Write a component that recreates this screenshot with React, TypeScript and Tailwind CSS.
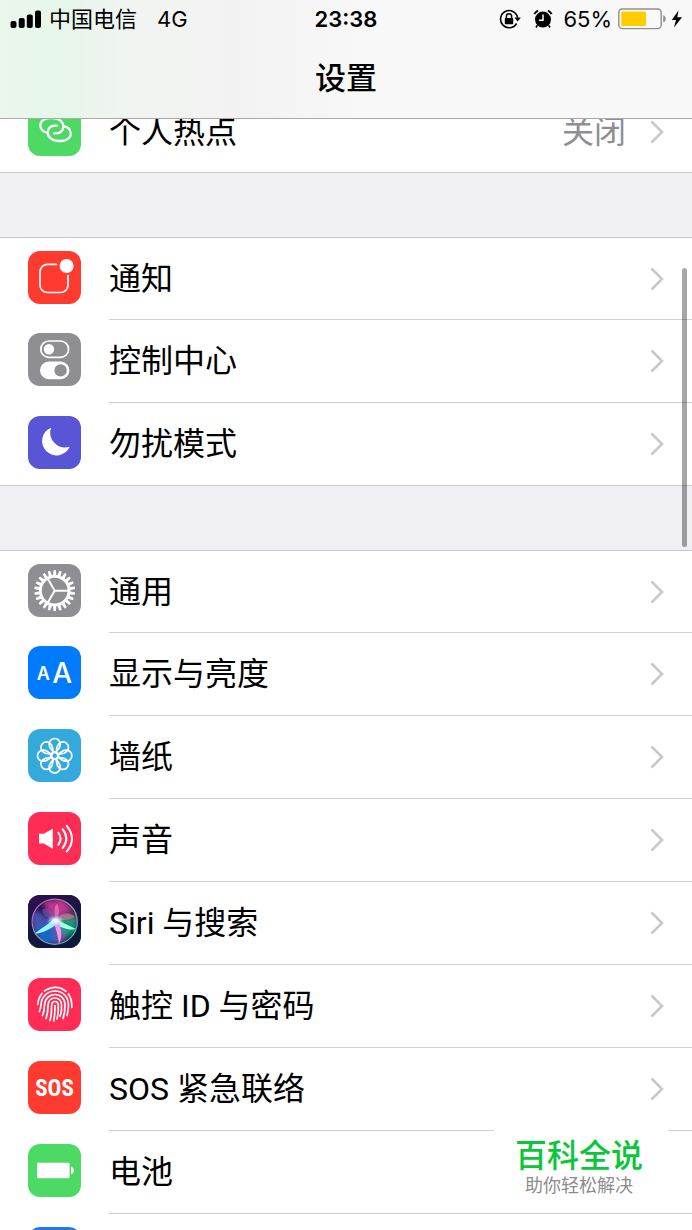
import type { ReactNode } from "react";

const white = { fill: "none", stroke: "#fff", strokeLinecap: "round" as const, strokeLinejoin: "round" as const };

function Tile({ color, children }: { color: string; children?: ReactNode }) {
  return (
    <span className={`mb-1 block size-[53px] shrink-0 overflow-hidden rounded-xl ${color}`} aria-hidden="true">
      <svg viewBox="0 0 53 53" className="block size-full">
        {children}
      </svg>
    </span>
  );
}

const HotspotIcon = () => (
  <Tile color="bg-[#4cd964]">
    <g {...white} strokeWidth="2.300">
      <path d="M19.800 29.800 C15 29 12.300 26 12.300 22.300 C12.300 18 16.500 15 21.500 15 H24.500 C30.500 15 35.300 18.500 35.300 23.500 C35.300 27.300 32.500 30.300 28.500 30.300 H26" />
      <path d="M35.200 23.200 C40 24 42.700 27 42.700 30.700 C42.700 35 38.500 38 33.500 38 H30.500 C24.500 38 19.700 34.500 19.700 29.500 C19.700 25.700 22.500 22.700 26.500 22.700 H29" />
    </g>
  </Tile>
);

const NotificationIcon = () => (
  <Tile color="bg-[#ff3b30]">
    <path
      {...white}
      strokeWidth="1.700"
      d="M28.500 13.300 H19.500 A7.500 7.500 0 0 0 12 20.800 V34 A7.500 7.500 0 0 0 19.500 41.500 H32.500 A7.500 7.500 0 0 0 40 34 V24.500"
    />
    <circle cx="38.600" cy="15" r="7" fill="#fff" />
  </Tile>
);

const ControlIcon = () => (
  <Tile color="bg-[#8e8e93]">
    <rect x="12.800" y="8" width="27.800" height="16.400" rx="8.200" {...white} strokeWidth="1.700" />
    <circle cx="21" cy="16.200" r="5.200" fill="#fff" />
    <rect x="12" y="28.600" width="29.400" height="17.600" rx="8.800" fill="#fff" />
    <circle cx="32.600" cy="37.400" r="6.200" fill="#8e8e93" />
  </Tile>
);

const MoonIcon = () => (
  <Tile color="bg-[#5856d6]">
    <path fill="#fff" d="M23 11.700 A14.400 14.400 0 1 0 41.700 30.700 A15 15 0 0 1 23 11.700 Z" />
  </Tile>
);

const teeth = Array.from({ length: 22 }, (_, i) => (i * 360) / 22);

const GearIcon = () => (
  <Tile color="bg-[#8e8e93]">
    <g transform="translate(26.700 26.700)">
      <circle r="14.300" {...white} strokeWidth="2.800" />
      {teeth.map((a) => (
        <path key={a} d="M-1.700 -15 L-1.200 -20.400 H1.200 L1.700 -15 Z" fill="#fff" transform={`rotate(${a})`} />
      ))}
      <path {...white} strokeWidth="2" d="M0 0 H14 M0 0 L-7 -12.100 M0 0 L-7 12.100" />
    </g>
  </Tile>
);

const DisplayIcon = () => (
  <Tile color="bg-[#007aff]">
    <text x="8.700" y="34" fontSize="18" fontWeight="600" fill="#fff" fontFamily="Inter, sans-serif">A</text>
    <text x="24.300" y="36.500" fontSize="28" fontWeight="500" fill="#fff" fontFamily="Inter, sans-serif">A</text>
  </Tile>
);

const WallpaperIcon = () => (
  <Tile color="bg-[#34aadc]">
    <g transform="translate(26.700 26.700)" {...white} strokeWidth="1.700">
      {[0, 45, 90, 135, 180, 225, 270, 315].map((a) => (
        <path
          key={a}
          transform={`rotate(${a})`}
          d="M0 -3.200 C-3.500 -5.500 -5.500 -8.500 -5.500 -11.700 A5.500 5.500 0 0 1 5.500 -11.700 C5.500 -8.500 3.500 -5.500 0 -3.200 Z"
        />
      ))}
      <circle r="3.200" />
    </g>
  </Tile>
);

const SoundIcon = () => (
  <Tile color="bg-[#ff2d55]">
    <path fill="#fff" d="M11 21.800 H15.800 L24.800 16.800 V36.800 L15.800 31.600 H11 Z" />
    <g {...white} strokeWidth="2">
      <path d="M30.300 20.500 Q34.800 26.700 30.300 32.900" />
      <path d="M34.600 17.200 Q42 26.700 34.600 36.200" />
      <path d="M38.700 13.800 Q49.300 26.700 38.700 39.600" />
    </g>
  </Tile>
);

const SiriIcon = () => (
  <Tile color="bg-[#141533]">
    <defs>
      <linearGradient id="siri-bg" x1="0" y1="0" x2="0.4" y2="1">
        <stop offset="0" stopColor="#2f1050" />
        <stop offset="1" stopColor="#0b1a38" />
      </linearGradient>
      <linearGradient id="siri-ring" x1="0" y1="0" x2="1" y2="1">
        <stop offset="0" stopColor="#b04bb8" />
        <stop offset="0.500" stopColor="#9aa0b8" />
        <stop offset="1" stopColor="#57b0b5" />
      </linearGradient>
      <radialGradient id="siri-glow">
        <stop offset="0" stopColor="#fff" />
        <stop offset="0.400" stopColor="#d8f6ff" stopOpacity="0.800" />
        <stop offset="1" stopColor="#7fd6ff" stopOpacity="0" />
      </radialGradient>
      <clipPath id="siri-orb">
        <circle cx="26.700" cy="26.700" r="22.500" />
      </clipPath>
      <filter id="siri-soft" x="-40%" y="-40%" width="180%" height="180%">
        <feGaussianBlur stdDeviation="2.600" />
      </filter>
      <filter id="siri-fine" x="-20%" y="-20%" width="140%" height="140%">
        <feGaussianBlur stdDeviation="0.500" />
      </filter>
    </defs>
    <rect width="53" height="53" fill="url(#siri-bg)" />
    <g clipPath="url(#siri-orb)">
      <g filter="url(#siri-soft)">
        <path d="M26 26 L14 6 L36 4 L44 14 Z" fill="#c0368f" />
        <path d="M26 26 L2 12 L4 34 Z" fill="#4b4fb0" />
        <path d="M26 26 L4 34 L14 50 L28 48 Z" fill="#1668c4" />
        <path d="M26 26 L28 50 L38 46 L36 32 Z" fill="#7a4ab0" />
        <path d="M26 26 L50 22 L48 38 L38 42 Z" fill="#0e9a7c" />
        <path d="M28 24 L44 12 L50 24 Z" fill="#6b3560" />
      </g>
      <g filter="url(#siri-fine)">
        <path d="M28 26 C20 25 12 17 15 14 C20 12 27 18 28 26 Z" fill="#8c63c8" opacity="0.450" />
        <path d="M28 25 C25 17 27 9 29 9 C32 13 32 20 28 25 Z" fill="#e58cc4" opacity="0.600" />
        <path d="M28 24 C34 17 43 17 47 22 C42 25 34 26 28 24 Z" fill="#c497ad" opacity="0.550" />
        <path d="M27 23 C20 30 12 34 6 39 C16 38 24 33 30 28 Z" fill="#9df4f6" />
        <path d="M28 23 C34 28 42 31 48 34 C40 36 32 32 26 28 Z" fill="#a5ffe0" />
        <path d="M25 26 C28 33 30 41 31 49 C35 42 33 32 30 25 Z" fill="#ec9ce8" />
      </g>
      <ellipse cx="27.500" cy="26" rx="9" ry="6" fill="url(#siri-glow)" />
    </g>
    <circle cx="26.700" cy="26.700" r="22.600" fill="none" stroke="url(#siri-ring)" strokeWidth="1.200" />
  </Tile>
);

const TouchIdIcon = () => (
  <Tile color="bg-[#ff2d55]">
    <g {...white} strokeWidth="1.700">
      <path d="M16.500 13 C23 8 32 8 38 13.300" />
      <path d="M9.800 26.500 C10 22 11.500 18.500 14 15.500 M40.500 16 C43 19.500 44 24 43.800 29.500" />
      <path d="M11.500 33.500 C12.500 31 12.800 29 13 26.500 C13.500 18 20 13 27 13 C35 13 40.500 19 40.500 27 C40.500 31 40 34 39 37.500" />
      <path d="M14.500 37.500 C16 34 16.500 31 16.500 27 C16.800 20.500 21.500 16.500 27 16.500 C33 16.500 37 21 37 27 C37 32 36.500 36.500 35 40.500" />
      <path d="M18 40.500 C19.600 36 20 32 20 27.500 C20 22.800 23 20 27 20 C31 20 33.600 23 33.600 27.500 C33.600 33 33 36 32 38" />
      <path d="M22 42.500 C23.300 38 23.600 33 23.600 28 C23.600 25 25 23.500 27 23.500 C29 23.500 30.300 25 30.300 28 C30.300 33 30 37.500 29 41" />
      <path d="M26.900 27.500 C27 33 26.700 38 25.700 43" />
    </g>
  </Tile>
);

const SosIcon = () => (
  <Tile color="bg-[#ff3b30]">
    <text
      x="26.500"
      y="34.800"
      textAnchor="middle"
      fontSize="23"
      fontWeight="700"
      fill="#fff"
      fontFamily="'Roboto Condensed', 'Liberation Sans Narrow', Roboto, sans-serif"
    >
      SOS
    </text>
  </Tile>
);

const BatteryIcon = () => (
  <Tile color="bg-[#4cd964]">
    <rect x="9" y="18.700" width="32.600" height="15.600" rx="1" fill="#fff" />
    <path d="M43 22.800 C47 23.800 47 29.200 43 30.200 Z" fill="#fff" />
  </Tile>
);

const PrivacyIcon = () => <Tile color="bg-[#1a7ae8]" />;

type Item = { id: string; icon: ReactNode; label?: string; value?: string };

const groups: Item[][] = [
  [{ id: "hotspot", icon: <HotspotIcon />, label: "个人热点", value: "关闭" }],
  [
    { id: "notifications", icon: <NotificationIcon />, label: "通知" },
    { id: "control", icon: <ControlIcon />, label: "控制中心" },
    { id: "dnd", icon: <MoonIcon />, label: "勿扰模式" },
  ],
  [
    { id: "general", icon: <GearIcon />, label: "通用" },
    { id: "display", icon: <DisplayIcon />, label: "显示与亮度" },
    { id: "wallpaper", icon: <WallpaperIcon />, label: "墙纸" },
    { id: "sounds", icon: <SoundIcon />, label: "声音" },
    { id: "siri", icon: <SiriIcon />, label: "Siri 与搜索" },
    { id: "touchid", icon: <TouchIdIcon />, label: "触控 ID 与密码" },
    { id: "sos", icon: <SosIcon />, label: "SOS 紧急联络" },
    { id: "battery", icon: <BatteryIcon />, label: "电池" },
    { id: "more", icon: <PrivacyIcon /> },
  ],
];

function Chevron() {
  return (
    <svg viewBox="0 0 14 24" className="h-6 w-3.5 shrink-0" aria-hidden="true">
      <path d="M1.500 1.500 L12 12 L1.500 22.500" fill="none" stroke="#c7c7cc" strokeWidth="2.600" />
    </svg>
  );
}

function Row({ item }: { item: Item }) {
  return (
    <li className="group h-[83px] border-[#c8c7cc] font-[Roboto,'Noto_Sans_CJK_SC',sans-serif] first:border-t last:border-b">
      <a href={`#${item.id}`} className="flex h-full items-center gap-7 pl-7">
        {item.icon}
        <span className="flex h-full min-w-0 flex-1 items-center border-b border-[#d0d0d3] pr-7 group-last:border-b-0">
          <span className="flex-1 truncate text-[32px] leading-10">{item.label}</span>
          {item.value && <span className="mr-6 text-[32px] leading-10 text-[#8e8e93]">{item.value}</span>}
          <Chevron />
        </span>
      </a>
    </li>
  );
}

function StatusBar() {
  return (
    <div className="grid h-[38px] grid-cols-[1fr_auto_1fr] items-center px-2.5 text-[22px] leading-7">
      <div className="flex items-center gap-2">
        <svg viewBox="0 0 31 18" className="h-[18px] w-[31px]" aria-hidden="true">
          <rect x="0.500" y="11" width="6" height="7" rx="2" />
          <rect x="8.700" y="8" width="6" height="10" rx="2" />
          <rect x="16.800" y="4.500" width="6" height="13.500" rx="2" />
          <rect x="25" y="0.500" width="6" height="17.500" rx="2" />
        </svg>
        <span>中国电信</span>
        <span className="pl-3">4G</span>
      </div>
      <time className="font-semibold">23:38</time>
      <div className="flex items-center justify-end gap-1">
        <svg viewBox="0 0 22 20" className="mr-2 h-5 w-[22px]" aria-hidden="true">
          <path d="M17.600 14.500 A8.600 8.600 0 1 1 18.600 8.500" fill="none" stroke="#000" strokeWidth="1.600" />
          <path d="M15.400 8.600 H21.800 L18.700 12.600 Z" />
          <rect x="5.800" y="9" width="8.400" height="6.200" rx="0.800" />
          <path d="M7.400 9.500 V7.300 A2.600 2.600 0 0 1 12.600 7.300 V9.500" fill="none" stroke="#000" strokeWidth="1.500" />
        </svg>
        <svg viewBox="0 0 20 20" className="mr-1.5 size-5" aria-hidden="true">
          <circle cx="10" cy="10.600" r="8" />
          <path d="M1.300 5 A11 11 0 0 1 5 1.500 M15 1.500 A11 11 0 0 1 18.700 5" fill="none" stroke="#000" strokeWidth="2" />
          <path d="M10 5.500 V11.300 H6" fill="none" stroke="#fff" strokeWidth="1.500" />
          <path d="M4.300 16.300 L3 18.500 M15.700 16.300 L17 18.500" stroke="#000" strokeWidth="1.600" />
        </svg>
        <span>65%</span>
        <svg viewBox="0 0 48 22" className="ml-0.5 h-[22px] w-12" aria-hidden="true">
          <rect x="0.800" y="1" width="42.400" height="19.600" rx="3.500" fill="none" stroke="#8f8f90" strokeWidth="1.400" />
          <rect x="3.300" y="3.600" width="24.700" height="14.400" rx="1" fill="#ffcc00" />
          <path d="M45.200 7.300 C48.600 8.300 48.600 13.300 45.200 14.300 Z" fill="#8f8f90" />
        </svg>
        <svg viewBox="0 0 12 18" className="h-[18px] w-3" aria-hidden="true">
          <path d="M8.500 0.500 L1.800 10 H6 L4 17.500 L12 7.200 H7.300 Z" />
        </svg>
      </div>
    </div>
  );
}

export default function App() {
  return (
    <div className="relative h-screen overflow-hidden bg-[#efeff4] font-[Inter,'Noto_Sans_CJK_SC',sans-serif] text-black">
      <header className="relative z-10 border-b border-[#a9a9ab] bg-[#f8f8f8] bg-[linear-gradient(90deg,#ebf6ed_0%,#e6f6e9_8%,#f1f4f1_20%,#f2f2f2_34%,#f8f8f8_52%)]">
        <StatusBar />
        <h1 className="h-20 pt-5 text-center text-[31px] leading-10 font-medium">设置</h1>
      </header>

      <main className="-mt-[29px] flex flex-col gap-16">
        {groups.map((items) => (
          <ul key={items[0].id} className="bg-white">
            {items.map((item) => (
              <Row key={item.id} item={item} />
            ))}
          </ul>
        ))}
      </main>

      <div className="absolute top-[268px] right-[5px] h-[279px] w-[5px] rounded-full bg-black/35" />

      <aside className="absolute right-6 bottom-6 flex w-[174px] flex-col items-center bg-white pt-2 pr-1 pb-2">
        <strong className="text-[32px] leading-9 font-medium text-[#0bc63a]">百科全说</strong>
        <span className="text-[18px] leading-6 text-[#8c8c8c]">助你轻松解决</span>
      </aside>
    </div>
  );
}
